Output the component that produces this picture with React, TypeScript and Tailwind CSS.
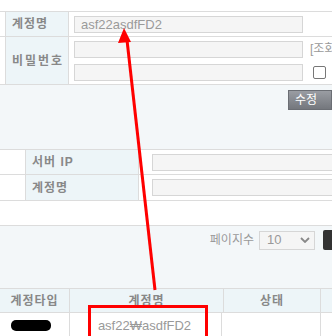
export default function App() {
  const font = { fontFamily: '"Liberation Sans", "Noto Sans CJK KR", sans-serif' };

  return (
    <div className="relative w-[332px] h-[336px] overflow-hidden bg-white text-[12px] text-[#8a8a8a]" style={font}>
      <div className="h-[11px]" />

      {/* account form */}
      <div className="border-t border-b border-[#dcdcdc]">
        <div className="flex h-[25px] border-b border-[#dcdcdc]">
          <div className="w-[6px] shrink-0 border-r border-[#dcdcdc]" />
          <div className="w-[63px] shrink-0 border-r border-[#dcdcdc] bg-[#edf5f8] flex items-center pl-[6px] font-bold text-[#888] tracking-[1px]">계정명</div>
          <div className="flex items-center pl-[5px]">
            <div className="w-[229px] h-[17px] shrink-0 border border-[#d6d6d6] bg-[#f5f5f5] pl-[6px] text-[13px] leading-[15px] text-[#9a9a9a]">asf22asdfFD2</div>
          </div>
        </div>
        <div className="flex h-[47px]">
          <div className="w-[6px] shrink-0 border-r border-[#dcdcdc]" />
          <div className="w-[63px] shrink-0 border-r border-[#dcdcdc] bg-[#edf5f8] flex items-center pl-[6px] font-bold text-[#888] tracking-[2px]">비밀번호</div>
          <div className="flex flex-col gap-[6px] pl-[5px] pt-[3px]">
            <div className="flex items-center gap-[7px]">
              <div className="w-[229px] h-[17px] shrink-0 border border-[#d6d6d6] bg-[#f5f5f5]" />
              <span className="text-[#999] whitespace-nowrap">[조회</span>
            </div>
            <div className="flex items-center gap-[10px]">
              <div className="w-[229px] h-[17px] shrink-0 border border-[#d6d6d6] bg-[#f5f5f5]" />
              <div className="w-[13px] h-[13px] shrink-0 border border-[#777] rounded-[2px] bg-white" />
            </div>
          </div>
        </div>
      </div>

      <div className="h-[64px] bg-[#f3f7f9] flex justify-end pt-[5px]">
        <button className="w-[44px] h-[20px] bg-gradient-to-b from-[#9a9da3] to-[#74777d] border border-[#6b6e74] text-white text-[12px] pl-[6px] text-left" style={font}>수정</button>
      </div>

      {/* search form */}
      <div className="border-t border-b border-[#dcdcdc]">
        {["서버 IP", "계정명"].map((label, i) => (
          <div key={label} className={`flex h-[25px] ${i === 0 ? "border-b border-[#dcdcdc]" : ""}`}>
            <div className="w-[26px] shrink-0 border-r border-[#dcdcdc]" />
            <div className="w-[113px] shrink-0 border-r border-[#dcdcdc] bg-[#edf5f8] flex items-center pl-[6px] font-bold text-[#888] tracking-[1px]">{label}</div>
            <div className="flex items-center pl-[13px]">
              <div className="w-[190px] h-[17px] shrink-0 border border-[#d6d6d6] bg-[#f5f5f5]" />
            </div>
          </div>
        ))}
      </div>

      <div className="h-[24px]" />

      {/* list options */}
      <div className="h-[63px] border-t border-[#dcdcdc] bg-[#f3f7f9] flex justify-end items-start pt-[4px]">
        <div className="flex items-center">
          <span className="text-[#999] mr-[5px]">페이지수</span>
          <div className="w-[56px] h-[19px] border border-[#d6d6d6] bg-[#f5f5f5] flex items-center justify-between pl-[7px] pr-[4px] text-[13px] text-[#999]">
            <span>10</span>
            <svg width="10" height="6" viewBox="0 0 10 6"><path d="M1 1l4 4 4-4" fill="none" stroke="#888" strokeWidth="1.8" /></svg>
          </div>
          <div className="ml-[8px] w-[9px] h-[20px] bg-[#333] rounded-l-[2px]" />
        </div>
      </div>

      {/* list table */}
      <div className="flex h-[25px] border-t border-b border-[#dcdcdc] bg-[#edf5f8] font-bold text-[#888] tracking-[1px]">
        <div className="w-[70px] shrink-0 border-r border-[#dcdcdc] flex items-center justify-center">계정타입</div>
        <div className="w-[154px] shrink-0 border-r border-[#dcdcdc] flex items-center justify-center">계정명</div>
        <div className="w-[97px] shrink-0 border-r border-[#dcdcdc] flex items-center justify-center">상태</div>
        <div className="flex-1" />
      </div>
      <div className="flex h-[25px]">
        <div className="w-[70px] shrink-0 border-r border-[#dcdcdc] flex items-center justify-center">
          <div className="w-[40px] h-[11px] bg-black rounded-[5px] -ml-[8px]" />
        </div>
        <div className="w-[154px] shrink-0 border-r border-[#dcdcdc] flex items-center justify-center text-[13px] text-[#999] -translate-x-[2px]">asf22₩asdfFD2</div>
        <div className="w-[97px] shrink-0 border-r border-[#dcdcdc]" />
        <div className="flex-1" />
      </div>

      {/* annotation */}
      <div className="absolute left-[88px] top-[305px] w-[120px] h-[40px] border-[3px] border-[#ff0000]" />
      <svg className="absolute left-0 top-0" width="332" height="336" viewBox="0 0 332 336">
        <line x1="155" y1="290" x2="127" y2="40" stroke="#ff0000" strokeWidth="3" />
        <polygon points="124,28 118,43 131,42" fill="#ff0000" />
      </svg>
    </div>
  );
}
